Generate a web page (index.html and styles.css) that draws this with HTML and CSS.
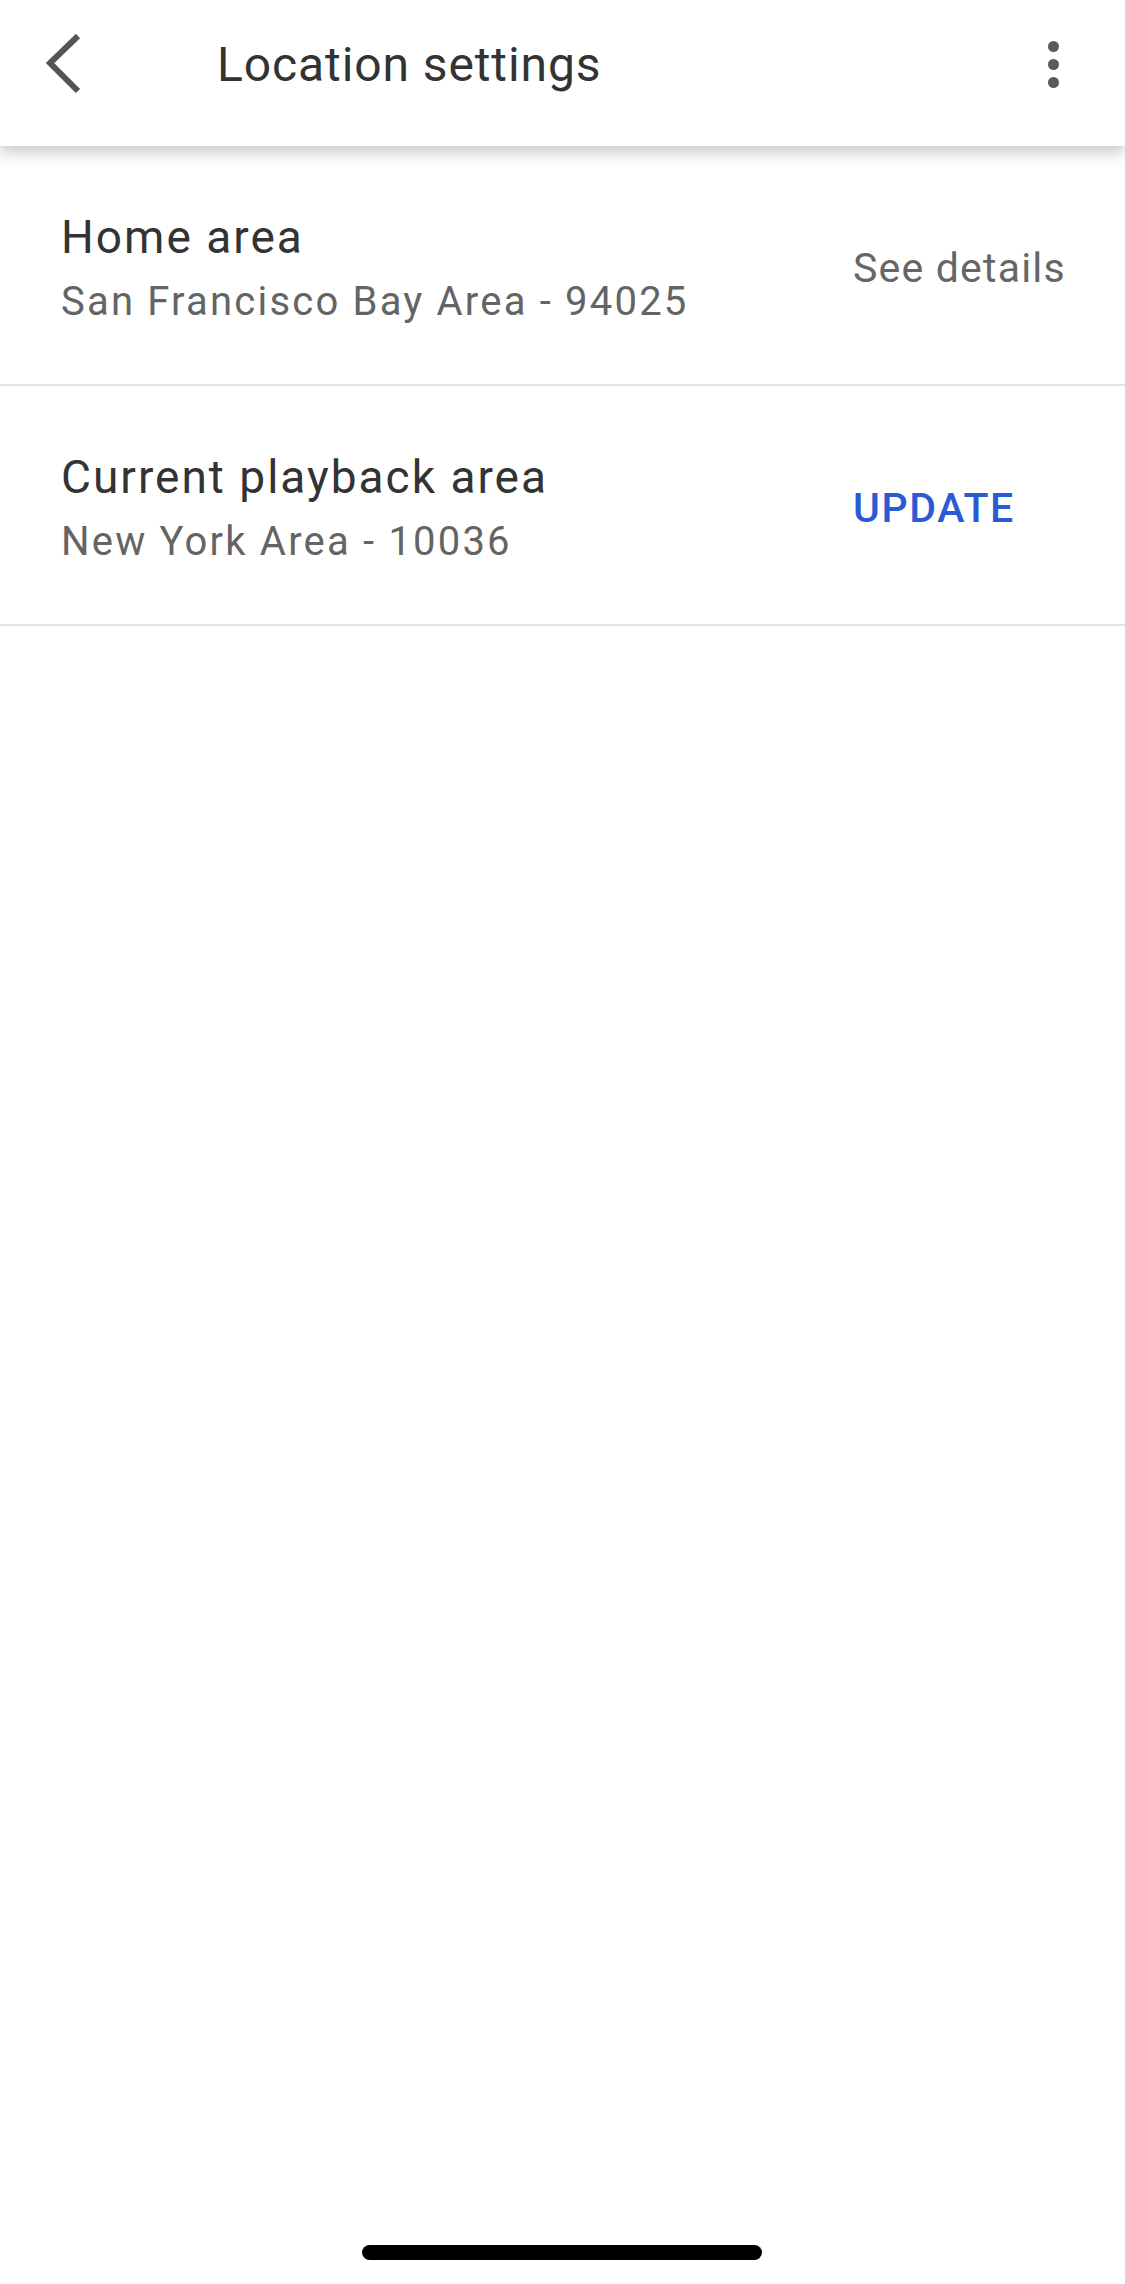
FILE: index.html
```html
<!DOCTYPE html>
<html lang="en">
<head>
  <meta charset="UTF-8" />
  <meta name="viewport" content="width=device-width, initial-scale=1.0" />
  <title>Location settings</title>
  <link rel="stylesheet" href="styles.css">
</head>
<body>

<div class="app">
  <header class="topbar">
    <div class="back">
      <svg width="40" height="62" viewBox="0 0 40 62">
        <polyline points="32,3 4,30 32,58" fill="none" stroke="#555" stroke-width="6"/>
      </svg>
    </div>
    <h1 class="title">Location settings</h1>
    <div class="menu">
      <span class="dot"></span>
      <span class="dot"></span>
      <span class="dot"></span>
    </div>
  </header>

  <div class="row">
    <div class="info">
      <div class="row-title">Home area</div>
      <div class="row-sub">San Francisco Bay Area - 94025</div>
    </div>
    <div class="action">See details</div>
  </div>

  <div class="row">
    <div class="info">
      <div class="row-title">Current playback area</div>
      <div class="row-sub">New York Area - 10036</div>
    </div>
    <div class="action link">UPDATE</div>
  </div>

  <div class="home-bar"></div>
</div>

</body>
</html>
```

FILE: styles.css
```css
* { box-sizing: border-box; }
body {
  margin: 0;
  font-family: Roboto, "Noto Sans", sans-serif;
  background: #fff;
  color: #333;
}
.app {
  position: relative;
  height: 2284px;
  overflow: hidden;
}
.topbar {
  display: flex;
  align-items: center;
  height: 146px;
  padding-bottom: 18px;
  background: #fff;
  box-shadow: 0 5px 16px rgba(0,0,0,0.25);
  position: relative;
  z-index: 2;
}
.back {
  width: 217px;
  padding-left: 46px;
  display: flex;
}
.title {
  flex: 1;
  margin: 0;
  font-size: 48px;
  font-weight: 400;
  letter-spacing: 0.9px;
  color: #333;
}
.menu {
  width: 74px;
  display: flex;
  flex-direction: column;
  align-items: flex-start;
  gap: 7px;
  margin-right: 14px;
}
.dot {
  width: 11px;
  height: 11px;
  border-radius: 50%;
  background: #5a5a5a;
  margin-left: 11px;
}
.row {
  display: flex;
  align-items: center;
  height: 240px;
  padding: 0 52px 0 61px;
  border-bottom: 2px solid #e3e3e3;
}
.info {
  flex: 1;
  padding-top: 8px;
}
.row-title {
  font-size: 46px;
  line-height: 54px;
  letter-spacing: 2px;
  color: #333;
}
.row-sub {
  margin-top: 12px;
  font-size: 40px;
  line-height: 52px;
  letter-spacing: 2.2px;
  color: #646464;
}
.action {
  flex-shrink: 0;
  width: 220px;
  padding-top: 6px;
  font-size: 41px;
  letter-spacing: 1.2px;
  white-space: nowrap;
  color: #666;
}
.link {
  color: #2b5bd4;
  font-weight: 500;
  letter-spacing: 1.6px;
}
.home-bar {
  position: absolute;
  left: 362px;
  top: 2245px;
  width: 400px;
  height: 15px;
  border-radius: 8px;
  background: #000;
}
```
